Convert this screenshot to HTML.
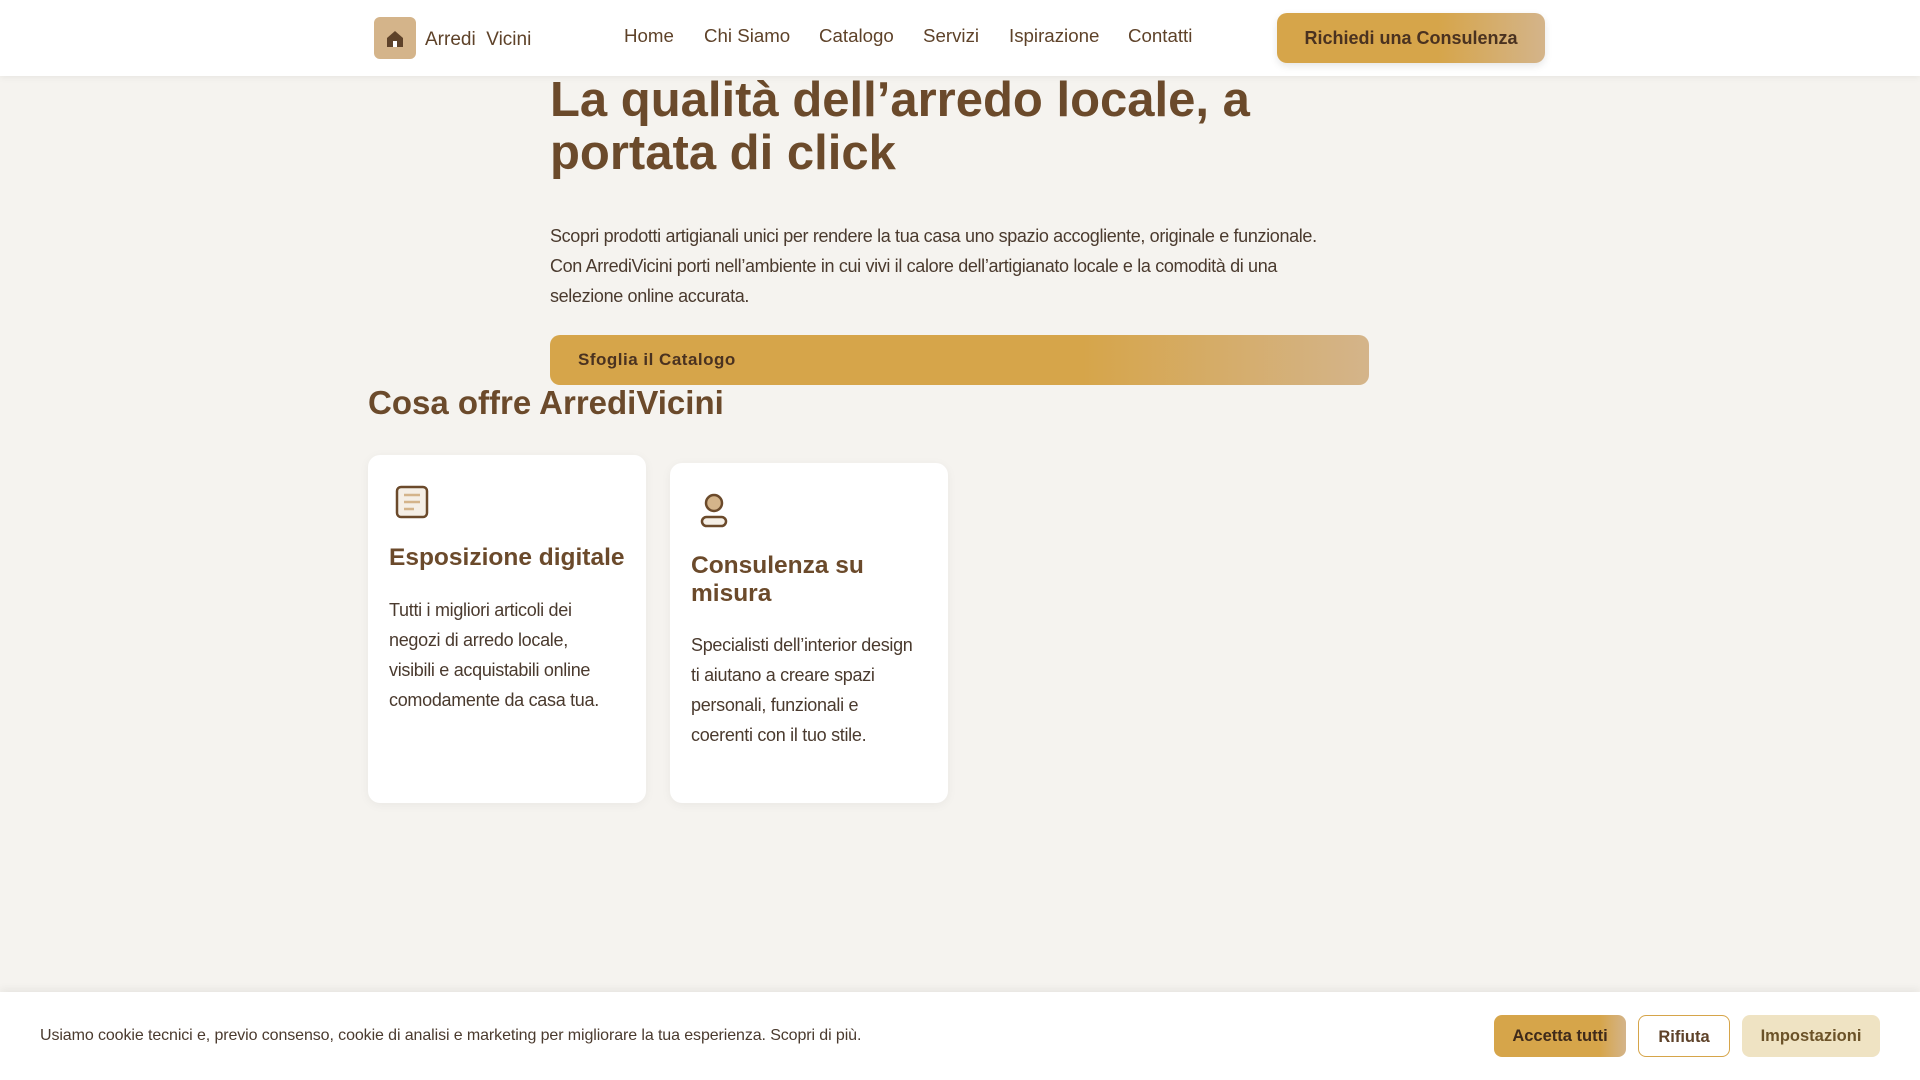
<!DOCTYPE html>
<html><head><meta charset="utf-8"><style>
*{box-sizing:border-box;margin:0;padding:0}
body{width:1920px;height:1080px;overflow:hidden;background:#f5f3ef;font-family:"Liberation Sans",sans-serif;color:#5e4229;position:relative}
header{position:absolute;top:0;left:0;width:1920px;height:76px;background:#fff;box-shadow:0 2px 6px rgba(0,0,0,.05)}
.logo{position:absolute;left:374px;top:17px;width:42px;height:42px;background:#d4b48a;border-radius:6px}
.brand{position:absolute;left:425px;top:29px;font-size:19px;color:#5e4229}
nav a{position:absolute;top:25px;font-size:18.7px;color:#5e4229;text-decoration:none}
.cta{position:absolute;left:1277px;top:13px;width:268px;height:50px;border-radius:10px;background:linear-gradient(90deg,#d6a54a 0%,#d6a54a 60%,#d4b48a 100%);font-weight:bold;font-size:18px;color:#4a3220;text-align:center;line-height:50px;box-shadow:0 3px 8px rgba(0,0,0,.1)}
h1{position:absolute;left:550px;top:74px;width:800px;font-size:49px;line-height:53px;font-weight:bold;color:#6b4a2b}
.p{position:absolute;left:550px;top:221px;width:790px;font-size:18px;letter-spacing:-0.35px;line-height:30px;color:#4a3a2e}
.b2{position:absolute;left:550px;top:335px;width:819px;height:50px;border-radius:10px;background:linear-gradient(90deg,#d6a54a 0%,#d6a54a 65%,#d4b48a 100%);font-weight:bold;font-size:17px;color:#4a3220;line-height:50px;padding-left:28px;letter-spacing:.5px}
h2{position:absolute;left:368px;top:384px;font-size:33px;font-weight:bold;color:#6b4a2b}
.card{position:absolute;background:#fff;border-radius:12px;box-shadow:0 2px 10px rgba(0,0,0,.05)}
.card h3{position:absolute;left:21px;font-size:24.5px;line-height:28px;font-weight:bold;color:#6b4a2b}
.card p{position:absolute;left:21px;width:232px;font-size:18px;letter-spacing:-0.3px;line-height:30px;color:#4a3a2e}
.ck{position:absolute;left:0;top:992px;width:1920px;height:88px;background:#fff;box-shadow:0 -3px 8px rgba(0,0,0,.06)}
.ck span{position:absolute;left:40px;top:35px;font-size:16px;letter-spacing:-0.1px;color:#4a3a2e}
.btn{position:absolute;top:23px;height:42px;border-radius:8px;font-weight:bold;font-size:16.5px;text-align:center;line-height:42px}
</style></head><body>
<header>
<div class="logo"><svg width="42" height="42" viewBox="0 0 42 42"><path d="M13 30V21L21 14L29 21V30Z" fill="#5e4229"/><rect x="19" y="24" width="4" height="6" fill="#fff"/></svg></div>
<div class="brand">Arredi&nbsp; Vicini</div>
<nav><a style="left:624px">Home</a><a style="left:704px">Chi Siamo</a><a style="left:819px">Catalogo</a><a style="left:923px">Servizi</a><a style="left:1009px">Ispirazione</a><a style="left:1128px">Contatti</a></nav>
<div class="cta">Richiedi una Consulenza</div>
</header>
<h1>La qualità dell’arredo locale, a portata di click</h1>
<div class="p">Scopri prodotti artigianali unici per rendere la tua casa uno spazio accogliente, originale e funzionale. Con ArrediVicini porti nell’ambiente in cui vivi il calore dell’artigianato locale e la comodità di una selezione online accurata.</div>
<div class="b2">Sfoglia il Catalogo</div>
<h2>Cosa offre ArrediVicini</h2>
<div class="card" style="left:368px;top:455px;width:278px;height:348px">
<svg style="position:absolute;left:25px;top:28px" width="38" height="38" viewBox="0 0 38 38"><rect x="4" y="4" width="30" height="30" rx="4" fill="#f5efe6" stroke="#6b4a2b" stroke-width="2.5"/><path d="M11 12H27M11 19H27M11 26H21" stroke="#d4b48a" stroke-width="2.5"/></svg>
<h3 style="top:89px">Esposizione digitale</h3>
<p style="top:140px;width:222px">Tutti i migliori articoli dei negozi di arredo locale, visibili e acquistabili online comodamente da casa tua.</p>
</div>
<div class="card" style="left:670px;top:463px;width:278px;height:340px">
<svg style="position:absolute;left:26px;top:28px" width="36" height="40" viewBox="0 0 36 40"><circle cx="18" cy="12" r="8" fill="#d4b48a" stroke="#6b4a2b" stroke-width="2.5"/><rect x="6" y="26" width="24" height="9" rx="4.5" fill="#f5efe6" stroke="#6b4a2b" stroke-width="2.5"/></svg>
<h3 style="top:89px">Consulenza su<br>misura</h3>
<p style="top:167px">Specialisti dell’interior design ti aiutano a creare spazi personali, funzionali e coerenti con il tuo stile.</p>
</div>
<div class="ck"><span>Usiamo cookie tecnici e, previo consenso, cookie di analisi e marketing per migliorare la tua esperienza. Scopri di più.</span>
<div class="btn" style="left:1494px;width:132px;background:linear-gradient(90deg,#d6a54a 0%,#d6a54a 80%,#d4b48a 100%);color:#3f2a1a">Accetta tutti</div>
<div class="btn" style="left:1638px;width:92px;border:1.5px solid #d6a54a;background:#fff;color:#5e4229">Rifiuta</div>
<div class="btn" style="left:1742px;width:138px;background:#efe3c3;color:#6b5228">Impostazioni</div>
</div>
</body></html>
